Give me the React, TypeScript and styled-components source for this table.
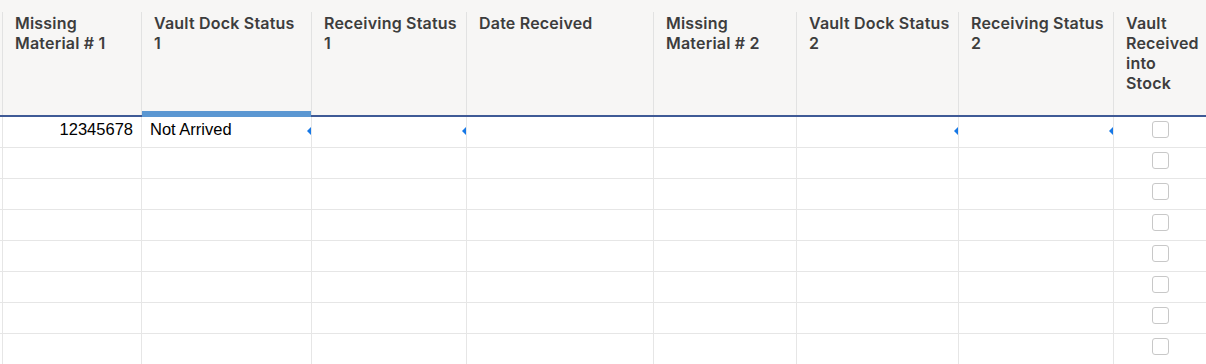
import styled, { createGlobalStyle } from 'styled-components';

const GlobalStyle = createGlobalStyle`
  html, body {
    margin: 0;
    padding: 0;
    background: #ffffff;
  }
`;

const columns = [
  { key: 'mm1', title: 'Missing Material # 1', width: 139 },
  { key: 'vds1', title: 'Vault Dock Status 1', width: 170, selected: true },
  { key: 'rs1', title: 'Receiving Status 1', width: 155 },
  { key: 'date', title: 'Date Received', width: 187 },
  { key: 'mm2', title: 'Missing Material # 2', width: 143 },
  { key: 'vds2', title: 'Vault Dock Status 2', width: 162 },
  { key: 'rs2', title: 'Receiving Status 2', width: 155 },
  { key: 'stock', title: 'Vault Received into Stock', width: 94 },
];

const dropdownCols = ['vds1', 'rs1', 'vds2', 'rs2'];

const rows = [
  { mm1: '12345678', vds1: 'Not Arrived' },
  {}, {}, {}, {}, {}, {}, {},
] as Record<string, string>[];

const Grid = styled.div`
  width: 1206px;
  height: 364px;
  overflow: hidden;
  font-family: Inter, 'Liberation Sans', sans-serif;
`;

const HeaderRow = styled.div`
  display: flex;
  background: #f7f6f5;
  padding: 12px 0 0 2px;
  border-bottom: 2px solid #3f5a96;
`;

const HeaderCell = styled.div<{ $w: number; $selected?: boolean }>`
  position: relative;
  flex: 0 0 ${p => p.$w}px;
  height: 103px;
  box-sizing: border-box;
  border-left: 1px solid #e2e2e2;
  padding: 1px 8px 0 12px;
  font-size: 16px;
  font-weight: 600;
  letter-spacing: 0.2px;
  line-height: 20px;
  color: #3d3d3d;

  ${p => p.$selected && `
    &::after {
      content: '';
      position: absolute;
      left: 0;
      right: 0;
      bottom: -2px;
      height: 6px;
      background: #5b97d2;
    }
  `}
`;

const BodyRow = styled.div`
  display: flex;
  padding-left: 2px;
  height: 31px;
  box-sizing: border-box;
  border-bottom: 1px solid #e6e6e6;
`;

const Cell = styled.div<{ $w: number; $align?: string }>`
  position: relative;
  flex: 0 0 ${p => p.$w}px;
  box-sizing: border-box;
  border-left: 1px solid #e6e6e6;
  display: flex;
  align-items: flex-start;
  justify-content: ${p => p.$align || 'flex-start'};
  padding: 2px 8px 0 8px;
  font-family: 'Liberation Sans', Arial, sans-serif;
  font-size: 16.5px;
  line-height: 20px;
  color: #000;
`;

const DropMark = styled.span`
  position: absolute;
  right: 0;
  top: 10px;
  width: 0;
  height: 0;
  border-top: 4px solid transparent;
  border-bottom: 4px solid transparent;
  border-right: 4px solid #1778e6;
`;

const Check = styled.span`
  width: 17px;
  height: 17px;
  margin-top: 2px;
  box-sizing: border-box;
  border: 1px solid #c8c8c8;
  border-radius: 3px;
  background: #fff;
`;

export default function App() {
  return (
    <Grid>
      <GlobalStyle />
      <HeaderRow>
        {columns.map(c => (
          <HeaderCell key={c.key} $w={c.width} $selected={c.selected}>
            {c.title}
          </HeaderCell>
        ))}
      </HeaderRow>
      {rows.map((r, i) => (
        <BodyRow key={i}>
          {columns.map(c => (
            <Cell
              key={c.key}
              $w={c.width}
              $align={c.key === 'mm1' ? 'flex-end' : c.key === 'stock' ? 'center' : undefined}
            >
              {c.key === 'stock' ? <Check /> : r[c.key]}
              {i === 0 && dropdownCols.includes(c.key) && <DropMark />}
            </Cell>
          ))}
        </BodyRow>
      ))}
    </Grid>
  );
}
